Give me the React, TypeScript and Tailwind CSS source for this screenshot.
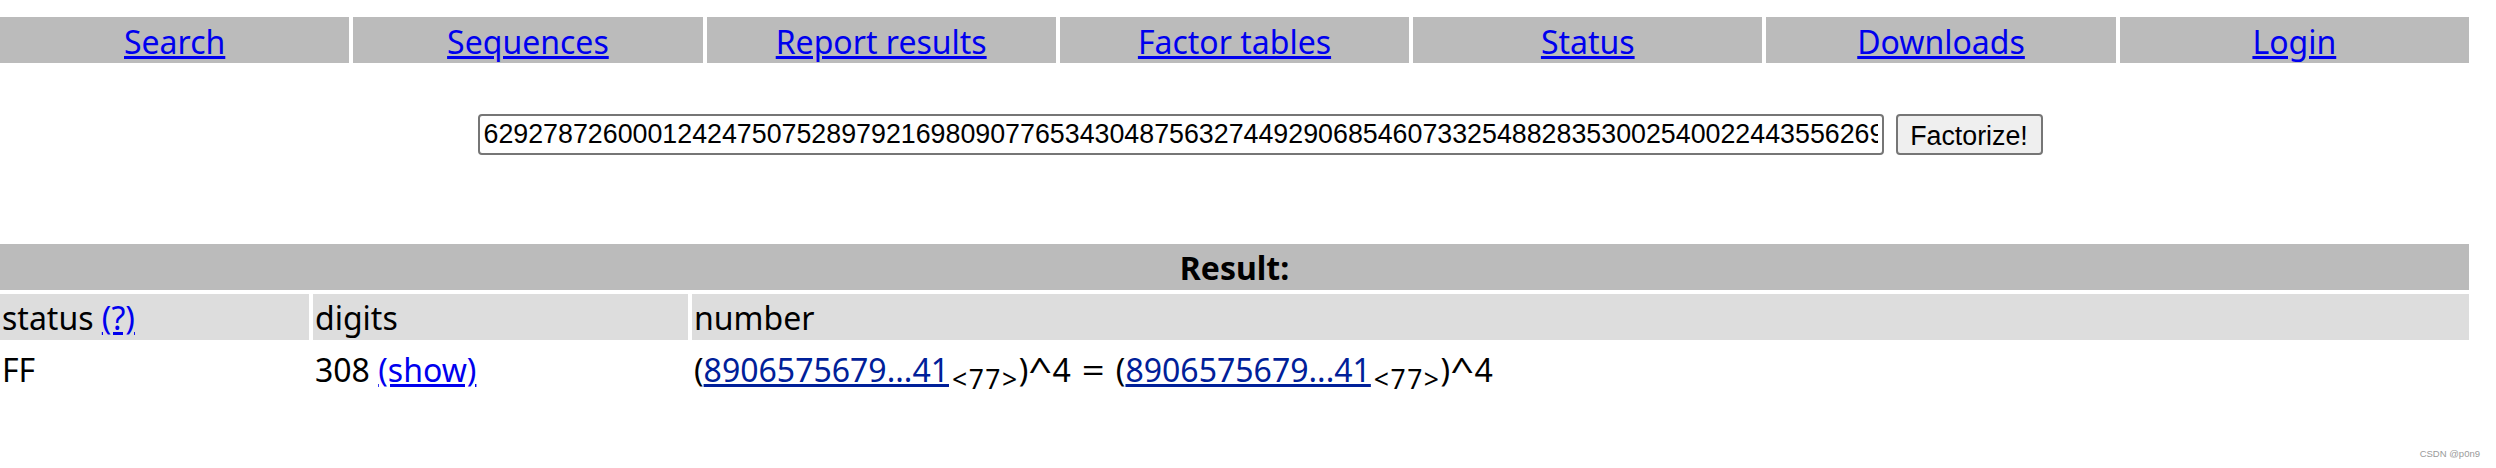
export default function App() {
  const navItems = ["Search", "Sequences", "Report results", "Factor tables", "Status", "Downloads", "Login"];
  const num =
    "62927872600012424750752897921698090776534304875632744929068546073325488283530025400224435562693";
  const Caret = () => <span className="inline-block px-[3px] scale-x-[1.3]">^</span>;
  return (
    <div className="relative w-[2496px] h-[468px] bg-white font-['Noto_Sans',sans-serif] text-[32px] leading-[42px] text-black overflow-hidden">
      <div className="pt-[17px] w-[2469px] flex gap-[4px]">
        {navItems.map((n) => (
          <div key={n} className="flex-1 h-[46px] pt-[3px] bg-[#bbbbbb] flex items-center justify-center">
            <a href="#" className="text-[#0000ee] underline">
              {n}
            </a>
          </div>
        ))}
      </div>
      <div className="mt-[51px] flex justify-center items-center pl-[24px] gap-[12px]">
        <input
          readOnly
          value={num}
          className="w-[1406px] h-[41px] border-2 border-[#767676] rounded-[4px] px-[4px] bg-white font-['Liberation_Sans',Arial,sans-serif] text-[26.8px] leading-normal text-black outline-none"
        />
        <button className="w-[147px] h-[41px] bg-[#efefef] border-2 border-[#767676] rounded-[4px] font-['Liberation_Sans',Arial,sans-serif] text-[26.8px] leading-normal text-black">
          Factorize!
        </button>
      </div>
      <div className="mt-[89px] w-[2469px] grid grid-cols-[309px_375px_1fr] gap-[4px]">
        <div className="col-span-3 h-[46px] pt-[2px] bg-[#bbbbbb] flex items-center justify-center font-bold">Result:</div>
        <div className="h-[46px] pt-[2px] bg-[#dddddd] px-[2px] flex items-center">
          status&nbsp;
          <a href="#" className="text-[#0000ee] underline">
            (?)
          </a>
        </div>
        <div className="h-[46px] pt-[2px] bg-[#dddddd] px-[2px] flex items-center">digits</div>
        <div className="h-[46px] pt-[2px] bg-[#dddddd] px-[2px] flex items-center">number</div>
        <div className="h-[46px] pt-[6px] px-[2px] flex items-center">FF</div>
        <div className="h-[46px] pt-[6px] px-[2px] flex items-center">
          308&nbsp;
          <a href="#" className="text-[#0000ee] underline">
            (show)
          </a>
        </div>
        <div className="h-[46px] pt-[6px] px-[2px] flex items-center whitespace-pre">
          <span>
            (<a href="#" className="text-[#002099] underline">8906575679...41</a>
            <sub className="text-[26.5px] ml-[3px] tracking-[1.5px]">&lt;77&gt;</sub>)<Caret />4{" "}
            <span className="inline-block px-[5px] scale-x-[1.25]">=</span>{" "}
            (<a href="#" className="text-[#002099] underline">8906575679...41</a>
            <sub className="text-[26.5px] ml-[3px] tracking-[1.5px]">&lt;77&gt;</sub>)<Caret />4
          </span>
        </div>
      </div>
      <div className="absolute right-[16px] bottom-[8px] text-[9.5px] leading-[12px] text-[#9a9a9a] font-['Liberation_Sans',Arial,sans-serif]">
        CSDN @p0n9
      </div>
    </div>
  );
}
